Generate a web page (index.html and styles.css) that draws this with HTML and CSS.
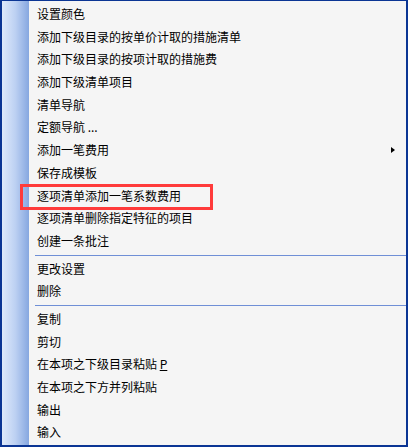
FILE: index.html
```html
<!DOCTYPE html>
<html>
<head>
<meta charset="utf-8">
<link rel="stylesheet" href="styles.css">
</head>
<body>
<div class="menu">
  <div class="strip"></div>
  <ul class="items">
    <li class="item">设置颜色</li>
    <li class="item">添加下级目录的按单价计取的措施清单</li>
    <li class="item">添加下级目录的按项计取的措施费</li>
    <li class="item">添加下级清单项目</li>
    <li class="item">清单导航</li>
    <li class="item">定额导航 ...</li>
    <li class="item has-sub">添加一笔费用<span class="arrow"></span></li>
    <li class="item">保存成模板</li>
    <li class="item">逐项清单添加一笔系数费用</li>
    <li class="item">逐项清单删除指定特征的项目</li>
    <li class="item">创建一条批注</li>
    <li class="sep"></li>
    <li class="item">更改设置</li>
    <li class="item">删除</li>
    <li class="sep"></li>
    <li class="item">复制</li>
    <li class="item">剪切</li>
    <li class="item">在本项之下级目录粘贴 <u>P</u></li>
    <li class="item">在本项之下方并列粘贴</li>
    <li class="item">输出</li>
    <li class="item">输入</li>
  </ul>
  <div class="highlight"></div>
</div>
</body>
</html>
```
FILE: styles.css
```css
html, body {
  margin: 0;
  padding: 0;
  background: #ffffff;
}
.menu {
  position: relative;
  width: 408px;
  height: 447px;
  box-sizing: border-box;
  border: 2px solid #0b3594;
  border-top-width: 1px;
  background: #f5f5f5;
  display: flex;
  font-family: "Noto Sans CJK SC", "Microsoft YaHei", sans-serif;
  font-size: 12px;
  color: #000;
}
.strip {
  width: 27px;
  flex: none;
  background: linear-gradient(to right, #dfeafb 0%, #bcd0f2 50%, #86a7e0 100%);
}
.items {
  list-style: none;
  margin: 0;
  padding: 2px 0 0 0;
  flex: 1;
  display: flex;
  flex-direction: column;
}
.item {
  height: 22.7px;
  line-height: 22.7px;
  padding-left: 8px;
  position: relative;
  white-space: nowrap;
}
.item u {
  text-decoration: underline;
  text-underline-offset: 1px;
}
.sep {
  height: 5px;
  position: relative;
  margin-left: 6px;
}
.sep::after {
  content: "";
  position: absolute;
  left: 0;
  right: 0;
  top: 2px;
  height: 1px;
  background: #6f8fd6;
}
.arrow {
  position: absolute;
  right: 11px;
  top: 8px;
  width: 0;
  height: 0;
  border-top: 3.5px solid transparent;
  border-bottom: 3.5px solid transparent;
  border-left: 4px solid #000;
}
.highlight {
  position: absolute;
  left: 18px;
  top: 183px;
  width: 193px;
  height: 26px;
  box-sizing: border-box;
  border: 3px solid #ff3b3b;
}
```
